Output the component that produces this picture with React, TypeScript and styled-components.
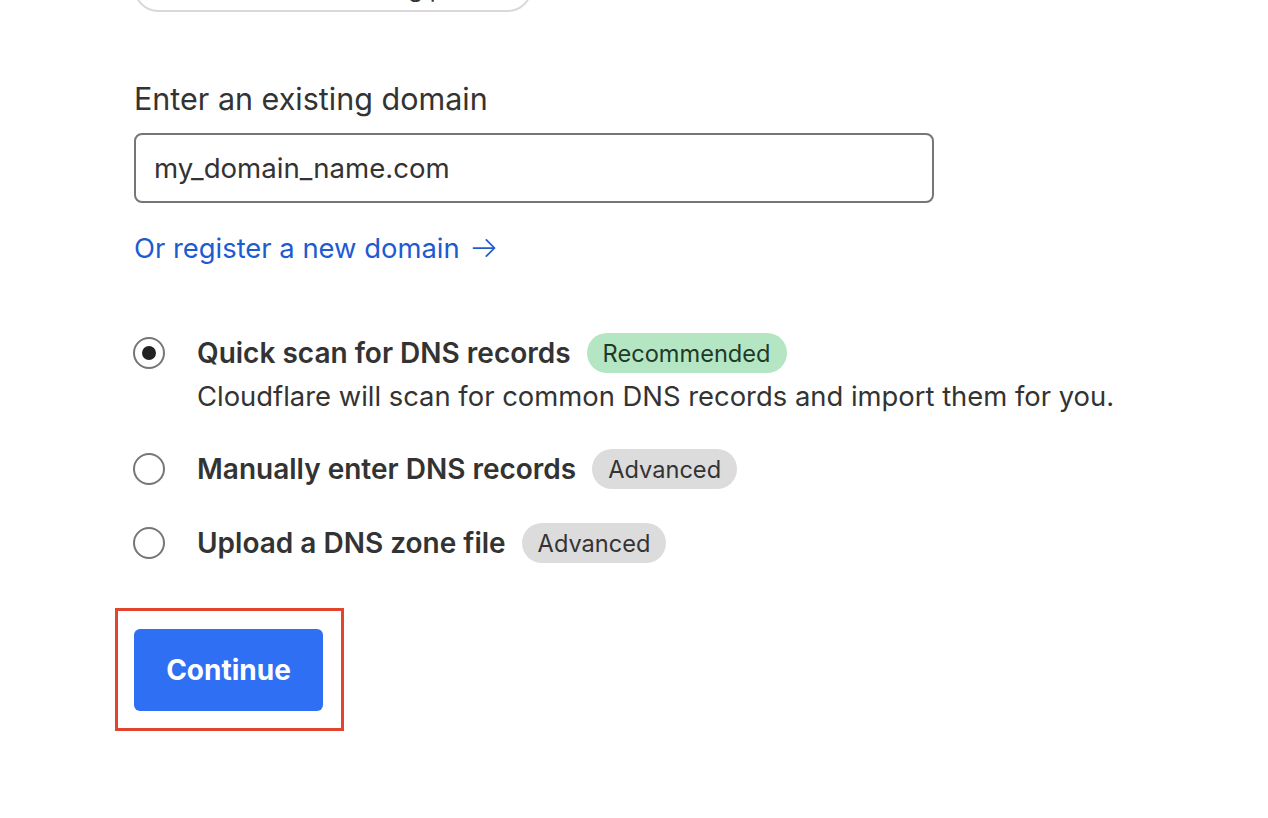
import { useState } from 'react';
import styled, { createGlobalStyle } from 'styled-components';

const GlobalStyle = createGlobalStyle`
  body {
    margin: 0;
    background: #ffffff;
    font-family: Inter, "Liberation Sans", sans-serif;
    color: #333333;
  }
`;

const Page = styled.div`
  display: flex;
  flex-direction: column;
  align-items: flex-start;
  padding: 0 0 0 134px;
`;

/* only the lower edge of this pill is in view */
const TopPill = styled.div`
  box-sizing: border-box;
  width: 398px;
  height: 60px;
  margin-top: -48px;
  border: 2px solid #d9d9d9;
  border-radius: 24px;
  display: flex;
  align-items: flex-start;
  justify-content: flex-end;
  padding: 20px 6px 0 0;
  overflow: hidden;
  white-space: nowrap;
  font-size: 24px;
  line-height: 30px;
  color: #333333;
`;

const Label = styled.label`
  margin-top: 70px;
  font-size: 30.5px;
  line-height: 34px;
  color: #333333;
`;

const Input = styled.input`
  box-sizing: border-box;
  margin-top: 17px;
  width: 800px;
  height: 70px;
  padding: 0 18px;
  border: 2px solid #767676;
  border-radius: 8px;
  font-family: Inter, "Liberation Sans", sans-serif;
  font-size: 27.6px;
  color: #333333;
  outline: none;
`;

const Link = styled.a`
  margin-top: 28px;
  display: flex;
  align-items: center;
  gap: 10px;
  font-size: 27.4px;
  line-height: 34px;
  color: #1d5bd1;
  text-decoration: none;
`;

const Options = styled.div`
  margin-top: 68px;
  display: flex;
  flex-direction: column;
  gap: 34px;
`;

const Option = styled.label`
  display: flex;
  align-items: flex-start;
  gap: 32px;
  cursor: pointer;
`;

const Radio = styled.span<{ checked: boolean }>`
  box-sizing: border-box;
  flex: none;
  width: 32px;
  height: 32px;
  margin-top: 4px;
  margin-left: -1px;
  border: 2px solid #767676;
  border-radius: 50%;
  display: flex;
  align-items: center;
  justify-content: center;

  &::after {
    content: '';
    width: 14px;
    height: 14px;
    border-radius: 50%;
    background: #222222;
    display: ${({ checked }) => (checked ? 'block' : 'none')};
  }
`;

const OptionBody = styled.div`
  display: flex;
  flex-direction: column;
`;

const TitleRow = styled.div`
  display: flex;
  align-items: center;
  gap: 16px;
`;

const Title = styled.span`
  font-size: 28px;
  font-weight: 600;
  line-height: 40px;
  color: #333333;
`;

const Badge = styled.span<{ tone: 'green' | 'gray' }>`
  height: 40px;
  padding: 0 16px;
  border-radius: 20px;
  display: flex;
  align-items: center;
  font-size: 23.6px;
  background: ${({ tone }) => (tone === 'green' ? '#b4e6c3' : '#dcdcdc')};
  color: ${({ tone }) => (tone === 'green' ? '#1f3a29' : '#333333')};
`;

const Description = styled.span`
  margin: 6px 0 2px;
  font-size: 27.4px;
  line-height: 34px;
  color: #333333;
`;

const Highlight = styled.div`
  margin-top: 45px;
  margin-left: -19px;
  padding: 18px 18px 17px 16px;
  border: 3px solid #e4432d;
`;

const Button = styled.button`
  width: 189px;
  height: 82px;
  border: none;
  border-radius: 6px;
  background: #2f6ff4;
  color: #ffffff;
  font-family: Inter, "Liberation Sans", sans-serif;
  font-size: 28px;
  font-weight: 700;
  cursor: pointer;
`;

const options = [
  {
    id: 'quick',
    title: 'Quick scan for DNS records',
    badge: 'Recommended',
    tone: 'green' as const,
    description: 'Cloudflare will scan for common DNS records and import them for you.',
  },
  { id: 'manual', title: 'Manually enter DNS records', badge: 'Advanced', tone: 'gray' as const },
  { id: 'upload', title: 'Upload a DNS zone file', badge: 'Advanced', tone: 'gray' as const },
];

export default function App() {
  const [selected, setSelected] = useState('quick');
  const [domain, setDomain] = useState('my_domain_name.com');

  return (
    <>
      <GlobalStyle />
      <Page>
        <TopPill>Use a hosting provider</TopPill>
        <Label htmlFor="domain">Enter an existing domain</Label>
        <Input id="domain" value={domain} onChange={e => setDomain(e.target.value)} />
        <Link href="#">
          Or register a new domain
          <svg width="28" height="28" viewBox="0 0 24 24" fill="none" stroke="currentColor" strokeWidth="1.5" strokeLinecap="round" strokeLinejoin="round">
            <path d="M3 12h18M14 5l7 7-7 7" />
          </svg>
        </Link>
        <Options>
          {options.map(option => (
            <Option key={option.id} onClick={() => setSelected(option.id)}>
              <Radio checked={selected === option.id} />
              <OptionBody>
                <TitleRow>
                  <Title>{option.title}</Title>
                  <Badge tone={option.tone}>{option.badge}</Badge>
                </TitleRow>
                {option.description && <Description>{option.description}</Description>}
              </OptionBody>
            </Option>
          ))}
        </Options>
        <Highlight>
          <Button>Continue</Button>
        </Highlight>
      </Page>
    </>
  );
};
